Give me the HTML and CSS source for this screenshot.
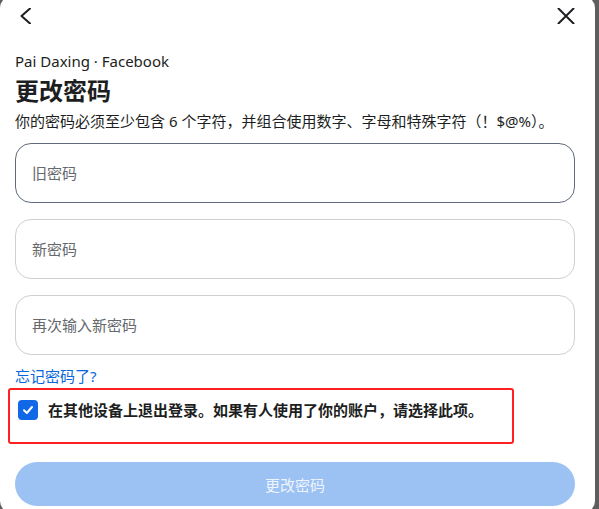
FILE: index.html
```html
<!DOCTYPE html>
<html lang="zh-CN">
<head>
    <meta charset="UTF-8">
    <meta name="viewport" content="width=device-width, initial-scale=1.0">
    <title>更改密码</title>
    <link rel="stylesheet" href="styles.css">
</head>
<body>

    <div class="dialog">
        <div class="topbar">
            <button class="icon-btn" aria-label="返回">
                <svg width="16" height="16" viewBox="0 0 16 16">
                    <polyline points="12,0.5 3.5,8 12,15.5" fill="none" stroke="#1c1e21" stroke-width="2" stroke-linecap="round" stroke-linejoin="round"/>
                </svg>
            </button>
            <button class="icon-btn" aria-label="关闭">
                <svg width="18" height="16" viewBox="0 0 18 16">
                    <path d="M1.5 0.5 L16.5 15.5 M16.5 0.5 L1.5 15.5" fill="none" stroke="#1c1e21" stroke-width="2" stroke-linecap="round"/>
                </svg>
            </button>
        </div>

        <p class="account">Pai Daxing · Facebook</p>
        <h1>更改密码</h1>
        <p class="hint">你的密码必须至少包含 6 个字符，并组合使用数字、字母和特殊字符（！$@%）。</p>

        <div class="fields">
            <div class="field focused">旧密码</div>
            <div class="field">新密码</div>
            <div class="field">再次输入新密码</div>
        </div>

        <a class="forgot" href="#">忘记密码了?</a>

        <label class="logout-row">
            <span class="checkbox">
                <svg width="12" height="12" viewBox="0 0 12 12">
                    <polyline points="2,6.3 4.8,9 10,3" fill="none" stroke="#fff" stroke-width="2" stroke-linecap="round" stroke-linejoin="round"/>
                </svg>
            </span>
            <span class="logout-text">在其他设备上退出登录。如果有人使用了你的账户，请选择此项。</span>
        </label>

        <button class="submit">更改密码</button>
    </div>

</body>
</html>
```

FILE: styles.css
```css
body {
    margin: 0;
    padding: 0;
    background-color: #5e5e5e;
    font-family: 'Noto Sans', 'Noto Sans CJK SC', sans-serif;
    color: #1c1e21;
    overflow: hidden;
    height: 509px;
}
.dialog {
    width: 595px;
    height: 517px;
    margin-top: -4px;
    background: white;
    border-radius: 12px;
    box-sizing: border-box;
    padding: 0 20px 0 15px;
}
.topbar {
    display: flex;
    justify-content: space-between;
    padding: 12px 0 0 3px;
    height: 16px;
}
.icon-btn {
    background: none;
    border: none;
    padding: 0;
    margin: 0;
    height: 16px;
    cursor: pointer;
    display: flex;
}
.account {
    margin: 27px 0 0;
    font-size: 15px;
    line-height: 20px;
}
h1 {
    margin: 3px 0 0;
    font-family: 'Noto Sans CJK SC', sans-serif;
    font-size: 24px;
    line-height: 32px;
    font-weight: 700;
}
.hint {
    margin: 4px 0 0;
    font-size: 15px;
    line-height: 22px;
}
.fields {
    display: flex;
    flex-direction: column;
    gap: 16px;
    margin-top: 11px;
}
.field {
    height: 60px;
    box-sizing: border-box;
    border: 1px solid #ced0d4;
    border-radius: 16px;
    padding: 0 16px 2px;
    display: flex;
    align-items: center;
    font-size: 15px;
    color: #65686c;
}
.field.focused {
    border-color: #5f6b7c;
}
.forgot {
    display: block;
    margin-top: 10px;
    font-size: 15px;
    line-height: 22px;
    color: #0a66dc;
    text-decoration: none;
}
.logout-row {
    display: flex;
    align-items: flex-start;
    gap: 10px;
    width: 506px;
    height: 56px;
    box-sizing: border-box;
    margin: 1px 0 0 -7px;
    padding: 10px 0 0 8px;
    border: 2px solid #ff2020;
    border-radius: 3px;
    cursor: pointer;
}
.checkbox {
    width: 20px;
    height: 20px;
    flex: none;
    border-radius: 4px;
    background: #1068e6;
    display: flex;
    align-items: center;
    justify-content: center;
}
.logout-text {
    font-size: 15px;
    line-height: 22px;
    font-weight: 700;
    margin-top: -1px;
}
.submit {
    display: block;
    width: 560px;
    height: 44px;
    margin-top: 18px;
    border: none;
    border-radius: 22px;
    background: #9cc2f4;
    color: #eef4fd;
    font-family: 'Noto Sans', 'Noto Sans CJK SC', sans-serif;
    font-size: 15px;
    cursor: pointer;
}
```
